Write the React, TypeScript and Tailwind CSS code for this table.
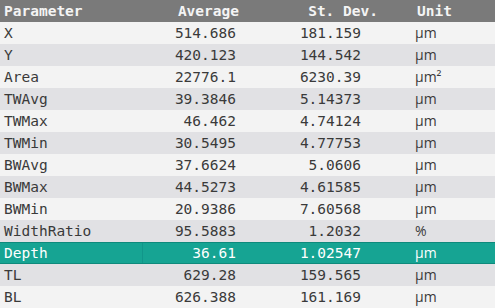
const rows: [string, string, string, string][] = [
  ["X", "514.686", "181.159", "µm"],
  ["Y", "420.123", "144.542", "µm"],
  ["Area", "22776.1", "6230.39", "µm²"],
  ["TWAvg", "39.3846", "5.14373", "µm"],
  ["TWMax", "46.462", "4.74124", "µm"],
  ["TWMin", "30.5495", "4.77753", "µm"],
  ["BWAvg", "37.6624", "5.0606", "µm"],
  ["BWMax", "44.5273", "4.61585", "µm"],
  ["BWMin", "20.9386", "7.60568", "µm"],
  ["WidthRatio", "95.5883", "1.2032", "%"],
  ["Depth", "36.61", "1.02547", "µm"],
  ["TL", "629.28", "159.565", "µm"],
  ["BL", "626.388", "161.169", "µm"],
];

const mono = "font-['DejaVu_Sans_Mono','Liberation_Mono',monospace]";

export default function App() {
  return (
    <div className={`w-[495px] h-[308px] overflow-hidden bg-[#f3f3f3] text-[14.5px] leading-[22px] ${mono}`}>
      <div className="grid grid-cols-[143px_100px_140px_1fr] h-[22px] bg-[#7a7a7a] text-[#f4f4f4] font-bold">
        <div className="pl-[4px]">Parameter</div>
        <div className="text-right pr-[4px]">Average</div>
        <div className="text-right pr-[5px]">St. Dev.</div>
        <div className="pl-[34px]">Unit</div>
      </div>
      {rows.map(([name, avg, sd, unit], i) => {
        const selected = name === "Depth";
        const bg = selected
          ? "bg-[#16a493] text-white border-y border-[#0e8a7c] leading-[20px]"
          : i % 2 === 0
            ? "bg-[#f3f3f3] text-[#3a3a3a]"
            : "bg-[#e1e1e4] text-[#3a3a3a]";
        return (
          <div key={name} className={`grid grid-cols-[143px_100px_140px_1fr] h-[22px] ${bg}`}>
            <div className={`pl-[4px] ${selected ? "border-r border-[#11968a]" : ""}`}>{name}</div>
            <div className="text-right pr-[7px]">{avg}</div>
            <div className="text-right pr-[22px]">{sd}</div>
            <div className="pl-[32px] font-['Open_Sans','Noto_Sans',sans-serif] text-[14px]">{unit}</div>
          </div>
        );
      })}
    </div>
  );
}
